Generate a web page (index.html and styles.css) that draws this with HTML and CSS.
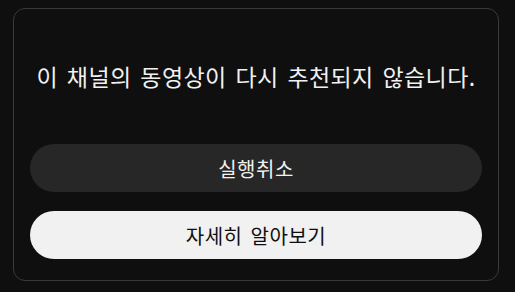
FILE: index.html
```html
<!DOCTYPE html>
<html lang="ko">
<head>
<meta charset="utf-8">
<link rel="stylesheet" href="styles.css">
</head>
<body>
<div class="card">
  <p class="message">이 채널의 동영상이 다시 추천되지 않습니다.</p>
  <div class="actions">
    <button class="btn btn-dark">실행취소</button>
    <button class="btn btn-light">자세히 알아보기</button>
  </div>
</div>
</body>
</html>
```

FILE: styles.css
```css
html, body {
  margin: 0;
  padding: 0;
  background: #0f0f0f;
}
body {
  font-family: "Noto Sans CJK KR", "Noto Sans", sans-serif;
  padding: 8px 0 0 13px;
}
.card {
  box-sizing: border-box;
  width: 486px;
  height: 273px;
  border: 1px solid #3a3a3a;
  border-radius: 12px;
  background: #0f0f0f;
  padding: 53px 16px 20px;
  display: flex;
  flex-direction: column;
}
.message {
  margin: 0;
  color: #f1f1f1;
  font-size: 23px;
  line-height: 28px;
  letter-spacing: 0.4px;
  word-spacing: 2px;
  text-align: center;
}
.actions {
  margin-top: 54px;
  display: flex;
  flex-direction: column;
  gap: 19px;
}
.btn {
  height: 48px;
  border: none;
  border-radius: 24px;
  font-family: inherit;
  font-size: 20px;
  letter-spacing: 0.5px;
  word-spacing: 2px;
  padding: 0;
}
.btn-dark {
  background: #272727;
  color: #f1f1f1;
}
.btn-light {
  background: #f1f1f1;
  color: #0f0f0f;
}
```
